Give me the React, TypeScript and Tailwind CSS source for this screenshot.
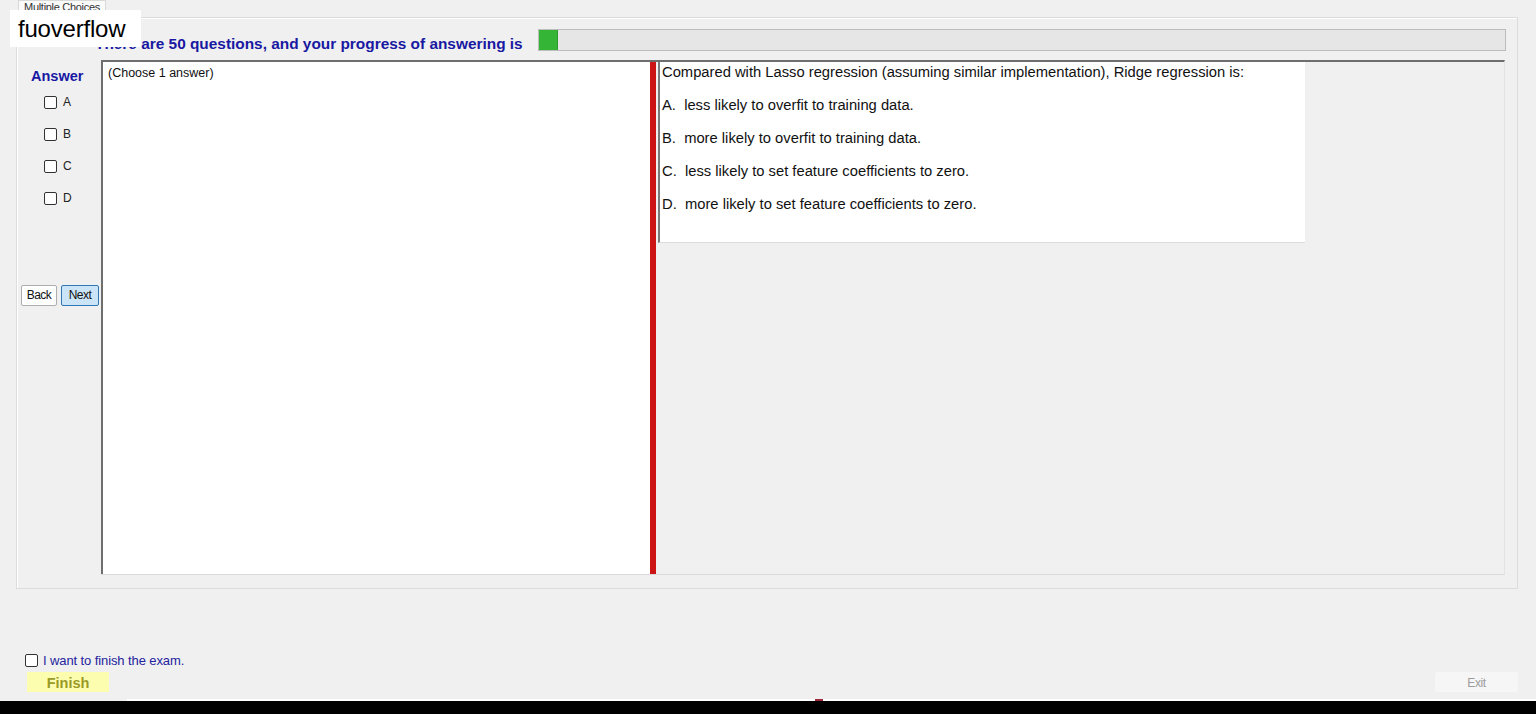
import { ReactNode } from 'react'

const options = [
  'A.  less likely to overfit to training data.',
  'B.  more likely to overfit to training data.',
  'C.  less likely to set feature coefficients to zero.',
  'D.  more likely to set feature coefficients to zero.',
]

const font = { fontFamily: '"Liberation Sans", Arial, sans-serif' }

function Box({ className = '' }: { className?: string }) {
  return (
    <span
      className={`inline-block w-[13px] h-[13px] rounded-[2px] border border-[#333] bg-white ${className}`}
    />
  )
}

function Choice({ label }: { label: string }) {
  return (
    <div className="flex items-center gap-[6px] h-[13px] pl-[23px]">
      <Box />
      <span className="text-[12px] text-[#222] leading-none">{label}</span>
    </div>
  )
}

function Btn({ children, className }: { children: ReactNode; className: string }) {
  return (
    <button
      className={`h-[21px] rounded-[2px] border text-[12px] leading-none tracking-[-0.5px] text-[#111] ${className}`}
    >
      {children}
    </button>
  )
}

export default function App() {
  return (
    <div className="relative w-full h-[714px] bg-[#f0f0f0] flex flex-col overflow-hidden" style={font}>
      {/* tab header */}
      <div className="h-[17px] pl-[18px] flex items-end">
        <div className="w-[88px] h-[17px] bg-[#fafafa] border border-b-0 border-[#d9d9d9] flex items-start justify-center">
          <span className="text-[11px] leading-[12px] text-[#333] tracking-[-0.3px]">Multiple Choices</span>
        </div>
      </div>

      {/* tab page */}
      <div className="ml-[16px] w-[1502px] h-[572px] border border-[#dcdcdc] shadow-[inset_1px_1px_0_#fff] flex flex-col">
        <div className="flex items-start h-[22px] mt-[11px] pl-[78px] pr-[11px]">
          <span className="mt-[7px] text-[15.4px] font-bold text-[#1818a2] leading-none whitespace-nowrap">
            There are 50 questions, and your progress of answering is
          </span>
          <div className="ml-[15px] flex-1 h-[22px] bg-[#e6e6e6] border border-[#bcbcbc] flex">
            <div className="w-[19px] h-full bg-[#35b535] border-r border-[#2a9a2a]" />
          </div>
        </div>

        <div className="flex mt-[9px] h-[515px] pl-[4px] pr-[12px]">
          {/* answer column */}
          <div className="w-[80px] flex flex-col">
            <div className="pl-[10px] pt-[9px] text-[14.5px] font-bold text-[#1818a2] leading-none">Answer</div>
            <div className="flex flex-col gap-[19px] mt-[12px]">
              {['A', 'B', 'C', 'D'].map((l) => (
                <Choice key={l} label={l} />
              ))}
            </div>
            <div className="flex gap-[4px] mt-[80px]">
              <Btn className="w-[36px] bg-white border-[#adadad]">Back</Btn>
              <Btn className="w-[38px] bg-[#cce4f7] border-[#2f78b7]">Next</Btn>
            </div>
          </div>

          {/* split panel */}
          <div className="flex-1 flex border-t-2 border-[#6e6e6e] border-r border-r-[#e3e3e3] border-b border-b-[#dadada]">
            <div className="w-[549px] bg-white border-l-2 border-[#6e6e6e] pl-[5px] pt-[4px]">
              <div className="text-[12.5px] leading-[14px] text-[#111]">(Choose 1 answer)</div>
            </div>
            <div className="w-[6px] bg-[#cc1414]" />
            <div className="flex-1 pl-[2px]">
              <div className="w-[647px] h-[181px] bg-white border-l-2 border-[#7a7a7a] border-b border-b-[#dcdcdc] pl-[2px] pt-[2px]">
                <div className="text-[14.75px] text-[#111] leading-[16px]">
                  Compared with Lasso regression (assuming similar implementation), Ridge regression is:
                </div>
                <div className="flex flex-col gap-[17px] mt-[17px]">
                  {options.map((o) => (
                    <div key={o} className="text-[14.75px] text-[#111] leading-[16px] whitespace-pre">
                      {o}
                    </div>
                  ))}
                </div>
              </div>
            </div>
          </div>
        </div>
      </div>

      {/* finish controls */}
      <div className="flex items-center gap-[5px] mt-[64px] pl-[25px] h-[14px]">
        <Box />
        <span className="text-[13px] text-[#24249e] leading-none tracking-[-0.1px]">I want to finish the exam.</span>
      </div>
      <div className="flex justify-between mt-[5px] pl-[27px] pr-[18px] h-[20px]">
        <button className="w-[82px] h-[20px] bg-[#fdfdb0] pt-[2px] text-[14.5px] font-bold text-[#9a9a26] leading-none">
          Finish
        </button>
        <button className="w-[83px] h-[20px] bg-[#f6f6f6] rounded-[3px] pt-[1px] text-[12px] text-[#9c9c9c] leading-none tracking-[-0.4px]">
          Exit
        </button>
      </div>

      {/* taskbar edge */}
      <div className="mt-auto h-[2px] flex">
        <div className="w-[127px] h-full" />
        <div className="flex-1 h-full bg-white flex">
          <div className="ml-[688px] w-[8px] h-[2px] bg-[#a0283c]" />
        </div>
      </div>
      <div className="h-[13px] bg-black" />

      <div className="absolute left-[10px] top-[10px] w-[131px] h-[37px] bg-white flex items-center pl-[8px]">
        <span className="text-[24px] text-black leading-none tracking-[-0.2px]">fuoverflow</span>
      </div>
    </div>
  )
}
